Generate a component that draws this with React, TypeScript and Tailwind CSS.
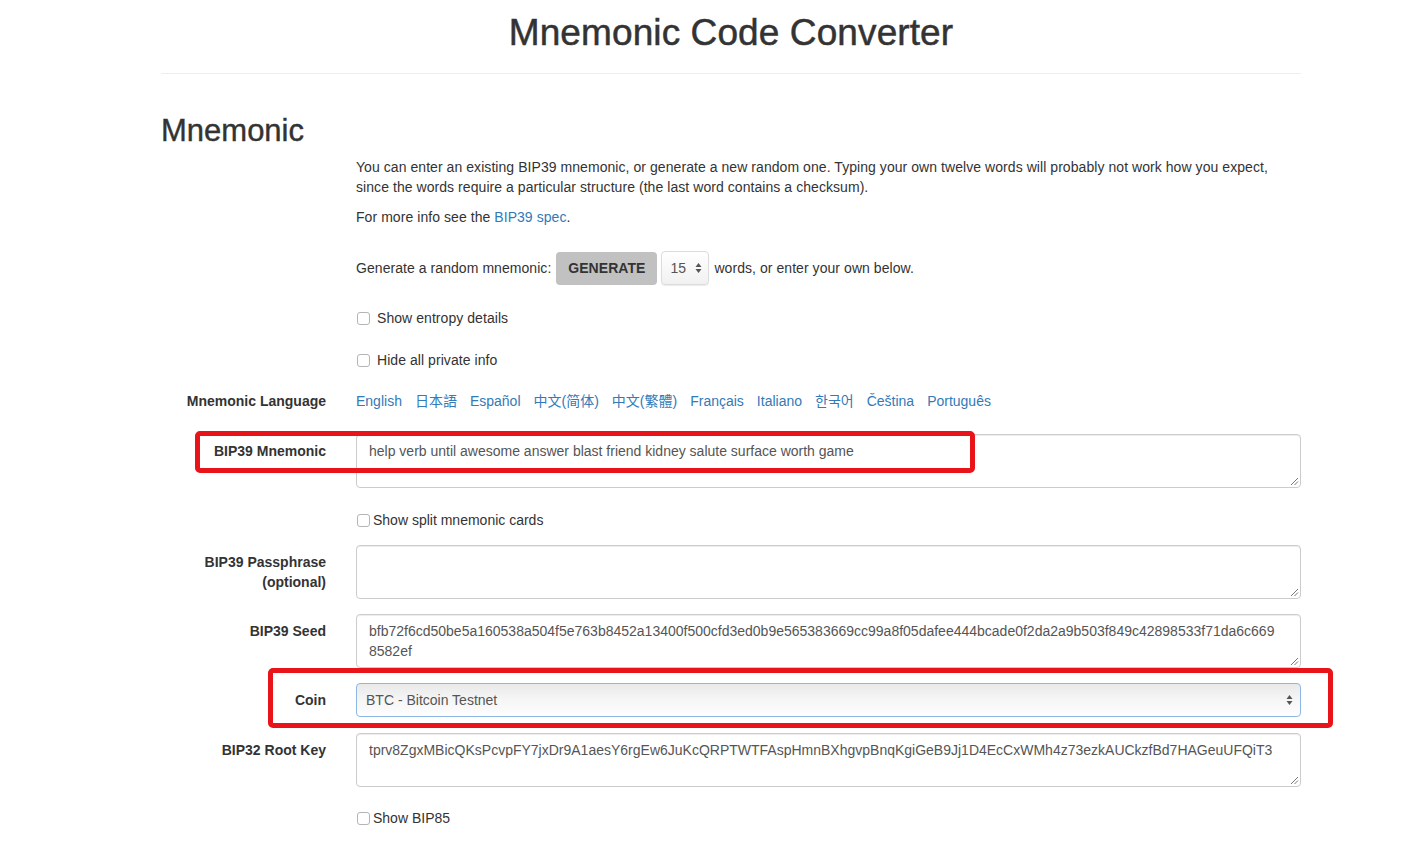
import React from "react";

function Grip() {
  return (
    <svg className="absolute right-[1px] bottom-[1px]" width="9" height="9" viewBox="0 0 9 9">
      <line x1="8" y1="1" x2="1" y2="8" stroke="#777" strokeWidth="1" />
      <line x1="8" y1="4.5" x2="4.5" y2="8" stroke="#777" strokeWidth="1" />
    </svg>
  );
}

function Area({ children }: { children?: React.ReactNode }) {
  return (
    <div className="relative h-[54px] w-[945px] rounded-[4px] border border-[#ccc] bg-white px-[12px] py-[6px] text-[#555] shadow-[inset_0_1px_1px_rgba(0,0,0,0.075)] break-all">
      {children}
      <Grip />
    </div>
  );
}

function Box() {
  return <span className="mt-[1px] inline-block h-[13px] w-[13px] shrink-0 rounded-[3px] border border-[#b5b5b5] bg-white" />;
}

function Row({ label, children, className = "" }: { label: React.ReactNode; children: React.ReactNode; className?: string }) {
  return (
    <div className={"flex " + className}>
      <div className="w-[165px] pt-[7px] text-right font-bold">{label}</div>
      <div className="ml-[30px] w-[945px]">{children}</div>
    </div>
  );
}

export default function App() {
  const langs = ["English", "日本語", "Español", "中文(简体)", "中文(繁體)", "Français", "Italiano", "한국어", "Čeština", "Português"];
  return (
    <div className="relative min-h-[855px] bg-white text-[14px] leading-[20px] text-[#333] font-['Liberation_Sans','Noto_Sans_CJK_SC','Noto_Sans_CJK_KR',Arial,sans-serif]">
      <div className="ml-[161px] w-[1140px]">
        <h1 className="pt-[13px] text-center text-[37px] leading-[40px] tracking-[0.1px] [-webkit-text-stroke:0.5px_#333]">Mnemonic Code Converter</h1>
        <div className="mt-[20px] h-px bg-[#eee]" />
        <h2 className="mt-[40px] text-[31px] leading-[33px] [-webkit-text-stroke:0.4px_#333]">Mnemonic</h2>
        <div className="ml-[195px] mt-[10px] w-[945px] tracking-[0.06px]">
          <p>
            You can enter an existing BIP39 mnemonic, or generate a new random one. Typing your own twelve words will probably not work how you expect,
            <br />
            since the words require a particular structure (the last word contains a checksum).
          </p>
          <p className="mt-[10px]">
            For more info see the <span className="text-[#337ab7]">BIP39 spec</span>.
          </p>
          <div className="mt-[24px] flex h-[34px] items-center">
            <span>Generate a random mnemonic:</span>
            <span className="ml-[5px] flex h-[33px] w-[101px] items-center justify-center rounded-[4px] bg-[#c1c1c1] font-bold text-[#333]">GENERATE</span>
            <span className="ml-[4px] flex h-[34px] w-[48px] items-center rounded-[4px] border border-[#dcdcdc] bg-gradient-to-b from-[#ffffff] to-[#f1f1f1] pl-[8px] text-[#555] shadow-[0_1px_1px_rgba(0,0,0,0.08)]">
              <span>15</span>
              <svg className="ml-[9px]" width="7" height="12" viewBox="0 0 7 12">
                <path d="M3.5 1 L6.5 5 L0.5 5 Z" fill="#555" />
                <path d="M3.5 11 L6.5 7 L0.5 7 Z" fill="#555" />
              </svg>
            </span>
            <span className="ml-[5px]">words, or enter your own below.</span>
          </div>
          <div className="mt-[23px] flex h-[20px] items-center">
            <span className="ml-[1px] flex"><Box /></span>
            <span className="ml-[7px]">Show entropy details</span>
          </div>
          <div className="mt-[22px] flex h-[20px] items-center">
            <span className="ml-[1px] flex"><Box /></span>
            <span className="ml-[7px]">Hide all private info</span>
          </div>
        </div>
        <div className="mt-[21px] flex h-[20px]">
          <div className="w-[165px] text-right font-bold">Mnemonic Language</div>
          <div className="ml-[30px] flex gap-[13px] text-[#337ab7]">
            {langs.map((l) => (
              <span key={l}>{l}</span>
            ))}
          </div>
        </div>
        <Row label="BIP39 Mnemonic" className="mt-[23px]">
          <Area>help verb until awesome answer blast friend kidney salute surface worth game</Area>
        </Row>
        <div className="ml-[195px] mt-[22px] flex h-[20px] items-center">
          <span className="ml-[1px] flex"><Box /></span>
          <span className="ml-[3px]">Show split mnemonic cards</span>
        </div>
        <Row
          label={
            <>
              BIP39 Passphrase
              <br />
              (optional)
            </>
          }
          className="mt-[15px]"
        >
          <Area />
        </Row>
        <Row label="BIP39 Seed" className="mt-[15px]">
          <Area>
            bfb72f6cd50be5a160538a504f5e763b8452a13400f500cfd3ed0b9e565383669cc99a8f05dafee444bcade0f2da2a9b503f849c42898533f71da6c669
            <br />
            8582ef
          </Area>
        </Row>
        <Row label="Coin" className="mt-[15px]">
          <div className="flex h-[34px] items-center rounded-[4px] border border-[#8db8e6] bg-gradient-to-b from-[#e9e9e9] via-[#f6f6f6] to-[#fdfdfd] pl-[9px] pr-[7px] text-[#555]">
            <span className="flex-1">BTC - Bitcoin Testnet</span>
            <svg width="7" height="12" viewBox="0 0 7 12">
              <path d="M3.5 1 L6.5 5 L0.5 5 Z" fill="#555" />
              <path d="M3.5 11 L6.5 7 L0.5 7 Z" fill="#555" />
            </svg>
          </div>
        </Row>
        <Row label="BIP32 Root Key" className="mt-[16px]">
          <Area>tprv8ZgxMBicQKsPcvpFY7jxDr9A1aesY6rgEw6JuKcQRPTWTFAspHmnBXhgvpBnqKgiGeB9Jj1D4EcCxWMh4z73ezkAUCkzfBd7HAGeuUFQiT3</Area>
        </Row>
        <div className="ml-[195px] mt-[21px] flex h-[20px] items-center">
          <span className="ml-[1px] flex"><Box /></span>
          <span className="ml-[3px]">Show BIP85</span>
        </div>
      </div>
      <div className="pointer-events-none absolute left-[195px] top-[431px] h-[42px] w-[780px] rounded-[5px] border-[5px] border-[#e8141a]" />
      <div className="pointer-events-none absolute left-[268px] top-[668px] h-[60px] w-[1065px] rounded-[5px] border-[5px] border-[#e8141a]" />
    </div>
  );
}
